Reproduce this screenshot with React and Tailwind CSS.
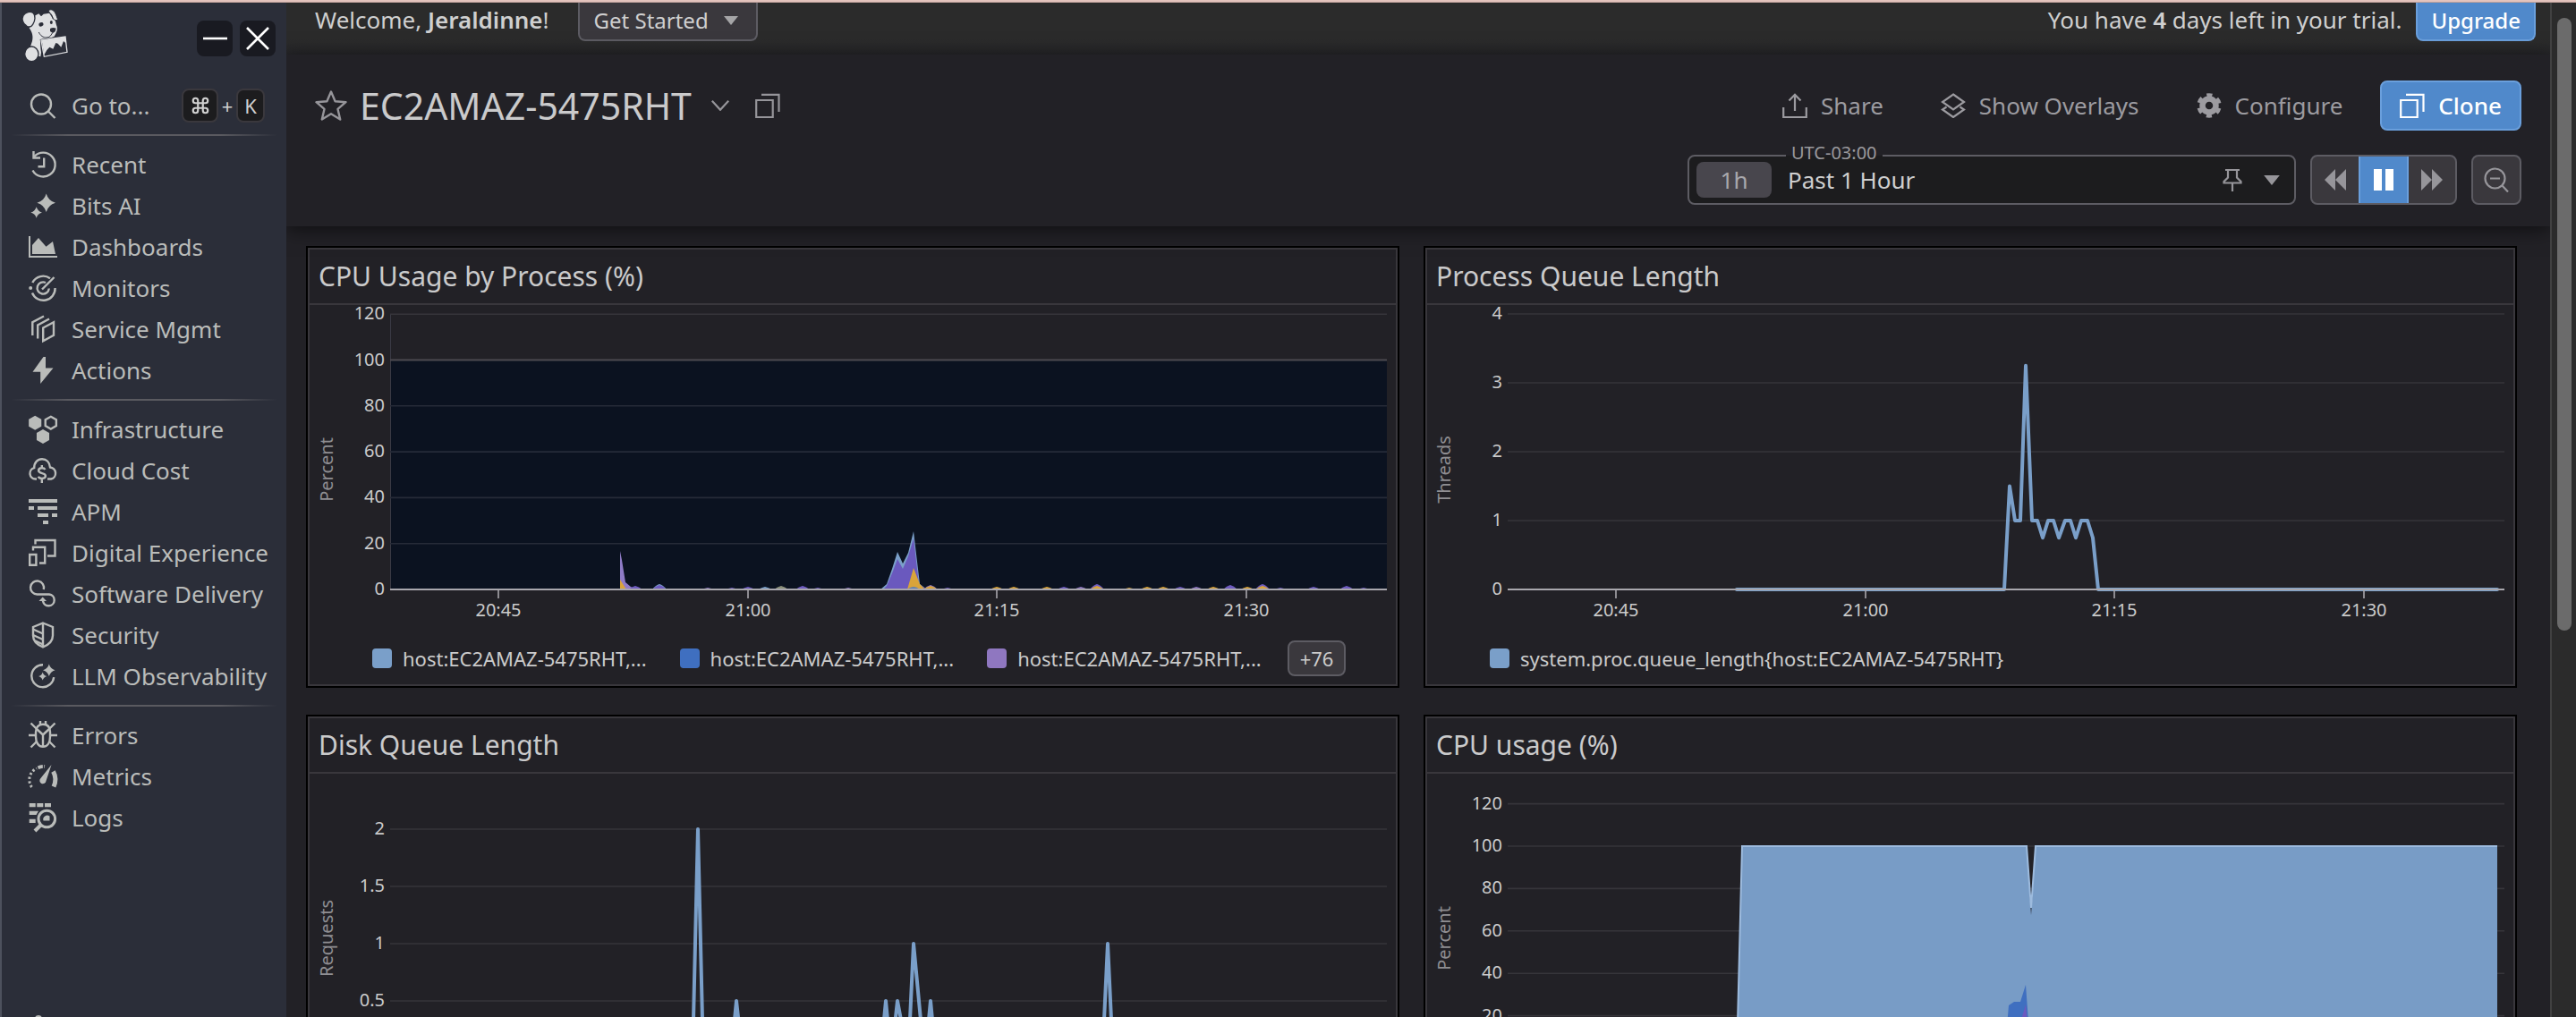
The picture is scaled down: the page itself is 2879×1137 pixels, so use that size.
import React from "react";

const sw = { fill: "none", stroke: "currentColor", strokeWidth: 2.4 };

function Star4({ x, y, r }) {
  const k = r * 0.22;
  return (
    <path
      fill="currentColor"
      d={`M${x} ${y - r}Q${x + k} ${y - k} ${x + r} ${y}Q${x + k} ${y + k} ${x} ${y + r}Q${x - k} ${y + k} ${x - r} ${y}Q${x - k} ${y - k} ${x} ${y - r}Z`}
    />
  );
}

const hex = (x, y, r) => {
  const w = r * 0.88;
  return `${x},${y - r} ${x + w},${y - r / 2} ${x + w},${y + r / 2} ${x},${y + r} ${x - w},${y + r / 2} ${x - w},${y - r / 2}`;
};

const ICONS = {
  search: (
    <g {...sw}>
      <circle cx="14" cy="14.5" r="11" />
      <path d="M21.5 22 29.5 30" />
    </g>
  ),
  recent: (
    <g {...sw}>
      <path d="M6.2 7.2A13.4 13.4 0 1 1 4.5 22.5" />
      <path d="M5.5 1v7.5H13M17.2 8.5v9.7h-6.7" />
    </g>
  ),
  bits: (
    <g>
      <Star4 x={19.7} y={12.7} r={10.3} />
      <Star4 x={8.7} y={23.5} r={6.3} />
    </g>
  ),
  dashboards: (
    <g fill="currentColor">
      <path d="M0 4h2v22h30v2H0Z" />
      <path d="M4 24V14l7-8 8.5 9.8L27 10l3 14Z" />
    </g>
  ),
  monitors: (
    <g {...sw}>
      <path d="M24 5.2A13.3 13.3 0 0 0 4.3 10" />
      <path d="M4 21.5A13.3 13.3 0 0 0 29.6 16" />
      <path d="M19 10a6.6 6.6 0 1 0 3.8 6.5" />
      <path d="M15 17.5 28.5 4" />
      <circle cx="2.2" cy="16" r="2" fill="currentColor" stroke="none" />
    </g>
  ),
  service: (
    <g {...sw}>
      <path d="M16.2 14.5 28 8.2v14.5l-11.8 6.5Z" />
      <path d="M10.2 26.5V11.5L23 4.5" />
      <path d="M4.3 23V8.3L17 1.5" />
    </g>
  ),
  actions: <path fill="currentColor" d="M16.5 1 4.5 17.7h8.7V31L27.5 13.5H19V1Z" />,
  infra: (
    <g fill="currentColor">
      <polygon points={hex(7.2, 8.7, 8)} />
      <polygon points={hex(24.8, 8.7, 6.9)} {...sw} />
      <polygon points={hex(16, 24, 8)} />
    </g>
  ),
  cloud: (
    <g {...sw}>
      <path d="M9 25.5H7.5a6.3 6.3 0 0 1-1.3-12.4C6.200 7 10 3.200 15 3.200S23.500 7 24 12.500a6.600 6.600 0 0 1 1 13H21" />
      <path d="M18.500 15c-.7-1.300-2-1.800-3.700-1.800-2.300 0-3.700 1.200-3.700 2.900 0 4.200 7.800 1.800 7.800 6 0 1.800-1.700 2.900-4 2.900-2 0-3.500-.8-4.100-2.200M14.800 10v4M14.800 24.500V30" />
    </g>
  ),
  apm: (
    <path
      fill="currentColor"
      d="M0 2h32v4H0ZM0 10h6v4H0ZM10 10h22v4H10ZM10 18h12v4H10ZM26 18h6v4h-6ZM16 26h6v4h-6Z"
    />
  ),
  digital: (
    <g {...sw}>
      <path d="M7.500 6.500V2h22v17.500H21" />
      <path d="M5 13.500V9.800h13.200v17.700H12" />
      <path d="M1.200 18h7.200v11.700H1.200Z" />
    </g>
  ),
  software: (
    <g {...sw}>
      <path d="M16.800 11A7.500 7.500 0 1 0 9.500 16.500H23a6.400 6.400 0 1 1-7 7.500V22" />
      <path d="M11.500 24 15.700 19.500 20 24Z" fill="currentColor" stroke="none" />
    </g>
  ),
  security: (
    <g {...sw}>
      <path d="M16 2.500 27 7v9.500C27 23 22 27 16 29.500 10 27 5 23 5 16.500V7ZM16 2.500v27" />
      <path d="M5 9.500 16 14.500M5 16 16 21M7.500 22.500 16 26.500" />
    </g>
  ),
  llm: (
    <g {...sw}>
      <path d="M16 3.200A12.500 12.500 0 1 0 28.200 17" />
      <g stroke="none">
        <Star4 x={22.800} y={9.300} r={6.800} />
        <Star4 x={15.700} y={16} r={4.600} />
      </g>
    </g>
  ),
  errors: (
    <g {...sw}>
      <path d="M8 12.500C8 7 11 3.800 16 3.800s8 3.200 8 8.700v5c0 7-3.200 11.300-8 11.300S8 24.500 8 17.500Z" />
      <path d="M9 9l7 6.500L23 9M16 15.500V29M13 4V0M19 4V0M0 16h8M24 16h8M2.500 2.500 9 9M29.500 2.500 23 9M2.500 29.500 9 23M29.500 29.500 23 23" />
    </g>
  ),
  metrics: (
    <g {...sw}>
      <path d="M3.500 28A14 14 0 0 1 9 7" strokeWidth="3" strokeDasharray="2.400 2.400" />
      <path d="M10.500 6.300a14 14 0 0 1 7.500-1.400" strokeWidth="3.600" strokeDasharray="5.500 1.500" />
      <path d="M27.500 10.500c2.800 5 3.200 11 .5 17" strokeWidth="5" />
      <path d="M25.500 3 19.500 21a3.600 3.600 0 1 1-6-3Z" fill="currentColor" stroke="none" />
    </g>
  ),
  logs: (
    <g {...sw}>
      <path fill="currentColor" stroke="none" d="M.7 0h7v4.300h-7ZM9.300 0h7v4.300h-7ZM18 0h7v4.300h-7ZM.7 8.700H11L8.500 13H.7ZM.7 17.700h7V22h-7Z" />
      <circle cx="20.300" cy="17.500" r="9.300" strokeWidth="3" />
      <path d="M13.500 24.500 7 31" strokeWidth="4" />
      <path fill="currentColor" stroke="none" d="M16.500 19.500a4.500 4.500 0 0 1 7-5v5Z" />
    </g>
  ),
};

function Icon({ name }) {
  return (
    <svg viewBox="0 0 32 32" className="h-8 w-8 shrink-0 overflow-visible" aria-hidden="true">
      {ICONS[name]}
    </svg>
  );
}

function DogLogo() {
  const ink = "#2b2e39";
  return (
    <svg viewBox="0 0 186 198" className="h-[66px] w-[62px]" fill="#dfe0e2" aria-hidden="true">
      <path d="M46 36 60 33l10-5 8 9 8-8 20-3 14 12 6 16 3 12c4 8 4 18-1 26l-6 12-16 6-28 4c-4 14-2 28 0 44l-2 14-42-10 14-42c4-16 0-30-10-44Z" />
      <path d="M102 18c10-8 20-2 26 14l6 16c-6 4-12 2-16-4Z" stroke={ink} strokeWidth="3" />
      <path d="M106 24c6 4 10 12 12 22" fill="none" stroke={ink} strokeWidth="3" />
      <path d="M18 34c8-12 24-16 34-8 8 8 6 26-2 38-6 10-16 10-22 4C16 60 12 46 18 34Z" stroke={ink} strokeWidth="4" />
      <ellipse cx="46" cy="163" rx="23" ry="25" stroke={ink} strokeWidth="4" />
      <ellipse cx="78" cy="64" rx="8" ry="6.500" fill={ink} transform="rotate(-25 78 64)" />
      <ellipse cx="112" cy="57" rx="4.500" ry="6" fill={ink} />
      <path d="M108 78c6-4 14-4 20-1l-3 11-8 5-9-6Z" fill={ink} />
      <path d="M70 90c6 12 14 18 26 18 10 0 14-6 20-16" fill="none" stroke={ink} strokeWidth="3" />
      <path d="M74 114 160 101l9 59-84 17Z" fill={ink} />
      <path d="M78 117 159 105l6 52-77 15Z" fill="none" stroke="#dfe0e2" strokeWidth="4" />
      <path d="m80 118 79-12 3 22-9-8-8 20-11-12-7-2-9 20-12-6-9 10-9 16Z" />
    </svg>
  );
}

const GROUPS = [
  [
    ["recent", "Recent"],
    ["bits", "Bits AI"],
    ["dashboards", "Dashboards"],
    ["monitors", "Monitors"],
    ["service", "Service Mgmt"],
    ["actions", "Actions"],
  ],
  [
    ["infra", "Infrastructure"],
    ["cloud", "Cloud Cost"],
    ["apm", "APM"],
    ["digital", "Digital Experience"],
    ["software", "Software Delivery"],
    ["security", "Security"],
    ["llm", "LLM Observability"],
  ],
  [
    ["errors", "Errors"],
    ["metrics", "Metrics"],
    ["logs", "Logs"],
  ],
];

function Divider() {
  return (
    <div className="mx-2.5 my-[9px] flex h-0.5 shrink-0">
      <span className="w-16 bg-linear-to-r from-transparent to-[#5a5a60]" />
      <span className="flex-1 bg-[#5a5a60]" />
      <span className="w-16 bg-linear-to-l from-transparent to-[#5a5a60]" />
    </div>
  );
}

function Sidebar() {
  return (
    <aside className="flex w-80 shrink-0 flex-col overflow-hidden border-l-2 border-[#4d515d] bg-[#2b2e39] text-[26px] text-[#babcba]">
      <div className="flex h-[92px] shrink-0 items-start justify-between pr-3 pl-[18px]">
        <a href="#home" aria-label="Home" className="mt-[3px]">
          <DogLogo />
        </a>
        <div className="mt-5 flex gap-2">
          <button aria-label="Minimize" className="flex size-10 items-center justify-center rounded-lg bg-[#191a21] text-white">
            <svg viewBox="0 0 40 40" className="size-10" stroke="currentColor" strokeWidth="2.600">
              <path d="M7 20h27" />
            </svg>
          </button>
          <button aria-label="Close" className="flex size-10 items-center justify-center rounded-lg bg-[#191a21] text-white">
            <svg viewBox="0 0 40 40" className="size-10" stroke="currentColor" strokeWidth="2.600">
              <path d="M8 8 32 32M32 8 8 32" />
            </svg>
          </button>
        </div>
      </div>
      <button className="flex h-[46px] shrink-0 items-center pr-6 pl-[30px]">
        <Icon name="search" />
        <span className="ml-4">Go to...</span>
        <span className="ml-auto flex items-center text-[22px] text-[#d0d0d0]">
          <kbd className="flex h-[38px] w-[41px] items-center justify-center rounded-lg border-2 border-[#3a383d] bg-[#1c1c1e]">
            <svg viewBox="0 0 24 24" className="size-[22px]" fill="none" stroke="currentColor" strokeWidth="2.400">
              <path d="M15 6v12a3 3 0 1 0 3-3H6a3 3 0 1 0 3 3V6a3 3 0 1 0-3 3h12a3 3 0 1 0-3-3" />
            </svg>
          </kbd>
          <span className="w-5 text-center">+</span>
          <kbd className="flex h-[38px] w-8 items-center justify-center rounded-lg border-2 border-[#3a383d] bg-[#1c1c1e] font-['Noto_Sans',sans-serif]">
            K
          </kbd>
        </span>
      </button>
      {GROUPS.map((items, i) => (
        <React.Fragment key={i}>
          <Divider />
          <nav className="flex shrink-0 flex-col">
            {items.map(([icon, label]) => (
              <a key={label} href="#nav" className="flex h-[46px] items-center gap-4 pl-[30px] whitespace-nowrap">
                <Icon name={icon} />
                {label}
              </a>
            ))}
          </nav>
        </React.Fragment>
      ))}
      <div className="mt-auto h-0.5 overflow-hidden pl-[37px]">
        <div className="size-2 rounded-full bg-current" />
      </div>
    </aside>
  );
}

function CopyIcon() {
  return (
    <svg viewBox="0 0 28 28" className="size-7 shrink-0" fill="none" stroke="currentColor" strokeWidth="2.200" aria-hidden="true">
      <path d="M1.200 8h18.500v19H1.200ZM7 1.800h19.500V21" />
    </svg>
  );
}

function Caret({ className }) {
  return (
    <svg viewBox="0 0 16 10" className={className} fill="currentColor" aria-hidden="true">
      <path d="M0 0h16L8 10Z" />
    </svg>
  );
}

function WelcomeBar() {
  return (
    <div className="h-[58px] bg-linear-to-b from-[#2b2b2b] from-70% to-[#252528] pr-4 pl-8">
      <div className="flex items-start justify-between text-[26px] leading-[38px] text-[#cfcfcf]">
        <div className="flex items-start">
          <p>
            Welcome, <b className="font-semibold">Jeraldinne</b>!
          </p>
          <button className="ml-8 flex h-[43px] items-center gap-[17px] rounded-b-lg border-2 border-t-0 border-[#5d5c63] bg-[#3a383d] pr-5 pb-0.5 pl-4 text-2xl">
            Get Started
            <Caret className="h-2.5 w-4 text-[#a5a5a7]" />
          </button>
        </div>
        <div className="flex items-start gap-4">
          <p>
            You have <b className="font-semibold">4</b> days left in your trial.
          </p>
          <button className="flex h-[43px] items-center rounded-b-lg border-2 border-t-0 border-[#6a9fdc] bg-[#5089cb] px-[15px] pb-0.5 text-2xl font-medium text-white">
            Upgrade
          </button>
        </div>
      </div>
    </div>
  );
}

function ToolButton({ icon, children }) {
  return (
    <button className="flex items-center gap-[15px]">
      <svg viewBox="0 0 28 28" className="size-7" fill="none" stroke="currentColor" strokeWidth="2.200" aria-hidden="true">
        {icon}
      </svg>
      {children}
    </button>
  );
}

function Header() {
  return (
    <header className="relative h-48 bg-[#222126] pr-8 pl-8 shadow-[0_4px_20px_rgba(0,0,0,0.550)]">
      <div className="flex items-center justify-between pt-[29px]">
        <div className="flex items-center text-[#96959a]">
          <button aria-label="Add to favorites">
            <svg viewBox="0 0 36 36" className="size-9" fill="none" stroke="currentColor" strokeWidth="2.400" strokeLinejoin="round">
              <path d="m18 2.500 4.600 10.700 11.900 1-9 7.700 2.700 11.600L18 27.300 7.800 33.500l2.700-11.600-9-7.700 11.900-1Z" />
            </svg>
          </button>
          <h1 className="ml-3.5 text-[41px] leading-[56px] text-[#cacacb]">EC2AMAZ-5475RHT</h1>
          <button aria-label="Switch dashboard" className="ml-[22px]">
            <svg viewBox="0 0 20 12" className="h-3 w-5" fill="none" stroke="currentColor" strokeWidth="2.200">
              <path d="m.8.8 9.200 10 9.200-10" />
            </svg>
          </button>
          <button aria-label="Copy title" className="ml-[29px]">
            <CopyIcon />
          </button>
        </div>
        <div className="flex items-center text-[26px] text-[#9c9ba0]">
          <div className="mr-[42px] flex gap-16">
            <ToolButton icon={<path d="M1.200 16v11h25.600V16M14 20V1.500M7.500 8.500 14 1.800l6.500 6.700" />}>Share</ToolButton>
            <ToolButton icon={<path d="M14 1.500 26 10l-12 8.500L2 10ZM6.500 15.500 2 18.500 14 27l12-8.500-4.500-3" />}>Show Overlays</ToolButton>
            <ToolButton
              icon={
                <g>
                  <circle cx="14" cy="14" r="7.500" strokeWidth="6.500" />
                  <circle cx="14" cy="14" r="11.500" strokeWidth="4.500" strokeDasharray="6 6.043" strokeDashoffset="-3" />
                </g>
              }
            >
              Configure
            </ToolButton>
          </div>
          <button className="flex h-14 items-center gap-[15px] rounded-lg border-2 border-[#6a9fdc] bg-[#5089cb] px-5 font-medium text-white">
            <CopyIcon />
            Clone
          </button>
        </div>
      </div>
      <div className="mt-[27px] flex justify-end gap-4 text-[#96959a]">
        <div className="relative flex h-14 w-[680px] items-center rounded-lg border-2 border-[#5d5c63] bg-[#1c1c1e]">
          <span className="absolute -top-[18px] left-[108px] bg-linear-to-b from-[#222126] from-60% to-[#1c1c1e] to-60% px-1.5 text-xl leading-7 text-[#9a999d]">
            UTC-03:00
          </span>
          <span className="ml-2 flex h-10 w-[84px] items-center justify-center rounded-lg bg-[#48464d] text-[26px] text-[#a9a8ac]">1h</span>
          <button className="ml-[18px] text-[26px] text-[#cfcfcf]">Past 1 Hour</button>
          <button aria-label="Pin time frame" className="ml-auto">
            <svg viewBox="0 0 22 26" className="h-[26px] w-[22px]" fill="none" stroke="currentColor" strokeWidth="2.200">
              <path d="M3 2h16M6 2v8.500L1.500 15v1.500h19V15L16 10.500V2M11 16.500V26" />
            </svg>
          </button>
          <button aria-label="Choose time frame" className="mr-4 ml-6">
            <Caret className="h-[11px] w-[18px]" />
          </button>
        </div>
        <div className="flex h-14 overflow-hidden rounded-lg border-2 border-[#5d5c63] bg-[#3a383d]">
          <button aria-label="Back" className="flex w-[52px] items-center justify-center">
            <svg viewBox="0 0 24 24" className="size-6" fill="currentColor">
              <path d="M12 0v24L0 12ZM24 0v24L12 12Z" />
            </svg>
          </button>
          <button aria-label="Pause" className="-my-0.5 flex w-14 items-center justify-center border-2 border-[#6a9fdc] bg-[#5089cb] text-white">
            <svg viewBox="0 0 22 24" className="h-6 w-[22px]" fill="currentColor">
              <path d="M0 0h9v24H0ZM13 0h9v24h-9Z" />
            </svg>
          </button>
          <button aria-label="Forward" className="flex w-[52px] items-center justify-center">
            <svg viewBox="0 0 24 24" className="size-6" fill="currentColor">
              <path d="M0 0v24l12-12ZM12 0v24l12-12Z" />
            </svg>
          </button>
        </div>
        <button aria-label="Zoom out" className="flex size-14 items-center justify-center rounded-lg border-2 border-[#5d5c63] bg-[#3a383d]">
          <svg viewBox="0 0 28 28" className="size-7" fill="none" stroke="currentColor" strokeWidth="2.200">
            <circle cx="12.500" cy="12.500" r="11" />
            <path d="M7 12.500h11M20.500 20.500 27 27.500" />
          </svg>
        </button>
      </div>
    </header>
  );
}

/* Plot area inside every chart: x 90..1204, zero line at y 318. */
const X0 = 90;
const X1 = 1204;
const BASE = 318;
const TIMES = [
  ["20:45", 211],
  ["21:00", 490],
  ["21:15", 768],
  ["21:30", 1047],
];

function Chart({ unit, unitY, ticks, step, band, children }) {
  return (
    <svg viewBox="0 0 1214 368" className="block h-auto w-full overflow-visible font-['Noto_Sans',sans-serif] text-xl" role="img" aria-label={unit}>
      {band && <rect x={X0} y={BASE - 5 * step} width={X1 - X0} height={5 * step} fill="#0b1220" />}
      {band && <path d={`M${X0 + 0.5} ${BASE}V${BASE - 6 * step}`} stroke="#3a3a44" />}
      {ticks.map((t, i) => {
        const y = BASE - i * step;
        const shade = !band || i === 6 ? "#36353a" : i === 5 ? "#4d4a50" : "#262b38";
        return (
          <g key={t}>
            {i > 0 && <path d={`M${X0} ${y}H${X1}`} stroke={shade} strokeWidth={i === 5 && band ? 2 : 1.6} />}
            <text x="84" y={y + 6} textAnchor="end" fill="#cbcbcb">
              {t}
            </text>
          </g>
        );
      })}
      <text x="0" y="0" transform={`translate(26 ${unitY}) rotate(-90)`} textAnchor="middle" fill="#8f8e92">
        {unit}
      </text>
      {children}
      <path d={`M${X0} ${BASE}H${X1}`} stroke="#a9a7ad" strokeWidth="2" />
      {TIMES.map(([label, x]) => (
        <g key={label}>
          <path d={`M${x} ${BASE}v10`} stroke="#a9a7ad" strokeWidth="1.600" />
          <text x={x} y={BASE + 30} textAnchor="middle" fill="#cbcbcb">
            {label}
          </text>
        </g>
      ))}
    </svg>
  );
}

function Card({ title, chart, children }) {
  return (
    <section className="border-2 border-black bg-[#222126]">
      <div className="border-2 border-[#39373c]">
        <h2 className="h-[62px] border-b-2 border-[#39373c] pl-2.5 text-[30px] leading-[60px] text-[#cacacb]">{title}</h2>
        {chart}
        <div className="flex h-14 items-center pb-0.5 pl-[70px] text-[22px] text-[#cbcbcb]">{children}</div>
      </div>
    </section>
  );
}

const Legend = ({ color, children }) => (
  <span className="mr-[37px] flex items-center gap-3">
    <i className={`size-[22px] rounded ${color}`} />
    {children}
  </span>
);

const line = (pts, step) => pts.map(([x, v]) => `${x},${BASE - v * step}`).join(" ");
const BLUE = { fill: "none", stroke: "#7a9fc9", strokeWidth: 4, strokeLinejoin: "round", strokeLinecap: "round" };

const QUEUE = [
  [346, 0], [645, 0], [651, 1.5], [657, 1], [663, 1], [669, 3.25], [676, 1], [682, 1], [688, 0.75], [694, 1], [700, 1],
  [706, 0.75], [713, 1], [719, 1], [725, 0.75], [731, 1], [738, 1], [744, 0.75], [750, 0], [1196, 0],
];
const DISK = [
  [346, 0], [428, 0], [434, 2], [440, 0], [471, 0], [477, 0.5], [484, 0], [638, 0], [644, 0.5], [650, 0], [657, 0.5],
  [669, 0], [675, 1], [687, 0], [688, 0], [694, 0.5], [700, 0], [886, 0], [892, 1], [898, 0], [1196, 0],
];
const BUMPS = [
  [364, 3, "#6f5cc0"], [391, 5, "#7a9fc9"], [391, 4, "#6f5cc0"], [445, 1, "#8d77bd"], [472, 1, "#6f5cc0"], [490, 2, "#6f5cc0"], [509, 2, "#7a9fc9"], [527, 3, "#8b8f7a"],
  [551, 3, "#6f5cc0"], [568, 1, "#6f5cc0"], [602, 1, "#8d77bd"], [694, 4, "#8d77bd"], [694, 3, "#d9a43a"], [713, 1, "#6f5cc0"],
  [768, 2, "#d9a43a"], [787, 2, "#d9a43a"], [824, 2, "#d9a43a"], [843, 2, "#6f5cc0"], [862, 2, "#8d77bd"], [880, 5, "#6f5cc0"], [880, 3, "#d9a43a"], [916, 1, "#d9a43a"],
  [936, 2, "#d9a43a"], [954, 2, "#d9a43a"], [973, 2, "#6f5cc0"], [991, 2, "#8d77bd"], [1010, 2, "#d9a43a"], [1029, 4, "#6f5cc0"],
  [1048, 2, "#d9a43a"], [1065, 5, "#6f5cc0"], [1065, 3, "#d9a43a"], [1085, 1, "#6f5cc0"], [1122, 2, "#6f5cc0"], [1159, 3, "#6f5cc0"], [1178, 1, "#6f5cc0"],
];

export default function App() {
  return (
    <div className="flex h-screen flex-col overflow-hidden bg-[#222126] font-['Noto_Sans',sans-serif]">
      <div className="h-[3px] shrink-0 border-b border-[#bd9f9a] bg-[#e4c4bd]" />
      <div className="flex min-h-0 flex-1">
        <Sidebar />
        <main className="min-w-0 flex-1 overflow-hidden">
          <WelcomeBar />
          <Header />
          <div className="grid grid-cols-2 gap-x-[27px] gap-y-[30px] pt-[22px] pr-[37px] pl-[22px]">
            <Card
              title="CPU Usage by Process (%)"
              chart={
                <Chart unit="Percent" unitY={184} ticks={["0", "20", "40", "60", "80", "100", "120"]} step={51.300} band>
                  <path d="M347 318V275L349 285L353 310L359 315L366 318Z" fill="#8f7bc6" />
                  <path d="M347 318V307L354 318Z" fill="#d9a43a" />
                  {BUMPS.map(([x, h, c], i) => (
                    <path key={i} d={`M${x - 8} 318Q${x - 4} ${318 - h} ${x} ${317 - h}Q${x + 4} ${318 - h} ${x + 8} 318Z`} fill={c} />
                  ))}
                  <path d="M638 318L645 312L651 295L657 276L663 289L669 277L675 253L682 312L690 318Z" fill="#7a9fc9" />
                  <path d="M641 318L645 314L651 300L657 284L663 295L669 281L675 261L681 312L690 318Z" fill="#6a59be" />
                  <path d="M668 318L675 294L682 312L688 318Z" fill="#d9a43a" />
                  <path d="M668 318Q675 312 682 318Z" fill="#5d7fb5" />
                </Chart>
              }
            >
              <Legend color="bg-[#7a9fc9]">host:EC2AMAZ-5475RHT,...</Legend>
              <Legend color="bg-[#3f6fc0]">host:EC2AMAZ-5475RHT,...</Legend>
              <Legend color="bg-[#8f77c0]">host:EC2AMAZ-5475RHT,...</Legend>
              <button className="-ml-2 h-10 rounded-lg border-2 border-[#5d5c63] bg-[#3a383d] px-3">+76</button>
            </Card>
            <Card
              title="Process Queue Length"
              chart={
                <Chart unit="Threads" unitY={184} ticks={["0", "1", "2", "3", "4"]} step={77}>
                  <polyline points={line(QUEUE, 77)} {...BLUE} />
                </Chart>
              }
            >
              <Legend color="bg-[#7a9fc9]">{"system.proc.queue_length{host:EC2AMAZ-5475RHT}"}</Legend>
            </Card>
            <Card
              title="Disk Queue Length"
              chart={
                <Chart unit="Requests" unitY={184} ticks={["0", "0.5", "1", "1.5", "2"]} step={64}>
                  <polyline points={line(DISK, 128)} {...BLUE} />
                </Chart>
              }
            />
            <Card
              title="CPU usage (%)"
              chart={
                <Chart unit="Percent" unitY={184} ticks={["0", "20", "40", "60", "80", "100", "120"]} step={47.400}>
                  <path d="M346 318L352 81H670L675 158L680 81H1196V318Z" fill="#789cc6" />
                  <path d="M346 318L352 81H670L675 150L680 81H1196" fill="none" stroke="#9dbbde" strokeWidth="2" />
                  <path d="M645 318L650 259L656 255H663L669 236L675 318Z" fill="#3f6fc0" />
                  <path d="M651 318L669 258L675 318Z" fill="#6a59be" />
                </Chart>
              }
            />
          </div>
        </main>
        <div className="w-[29px] shrink-0 border-l-2 border-[#414141] bg-[#2b2b2b] pt-[17px] pl-1.5">
          <div className="h-[685px] w-4 rounded-full bg-[#6b6b6b]" />
        </div>
      </div>
    </div>
  );
}
